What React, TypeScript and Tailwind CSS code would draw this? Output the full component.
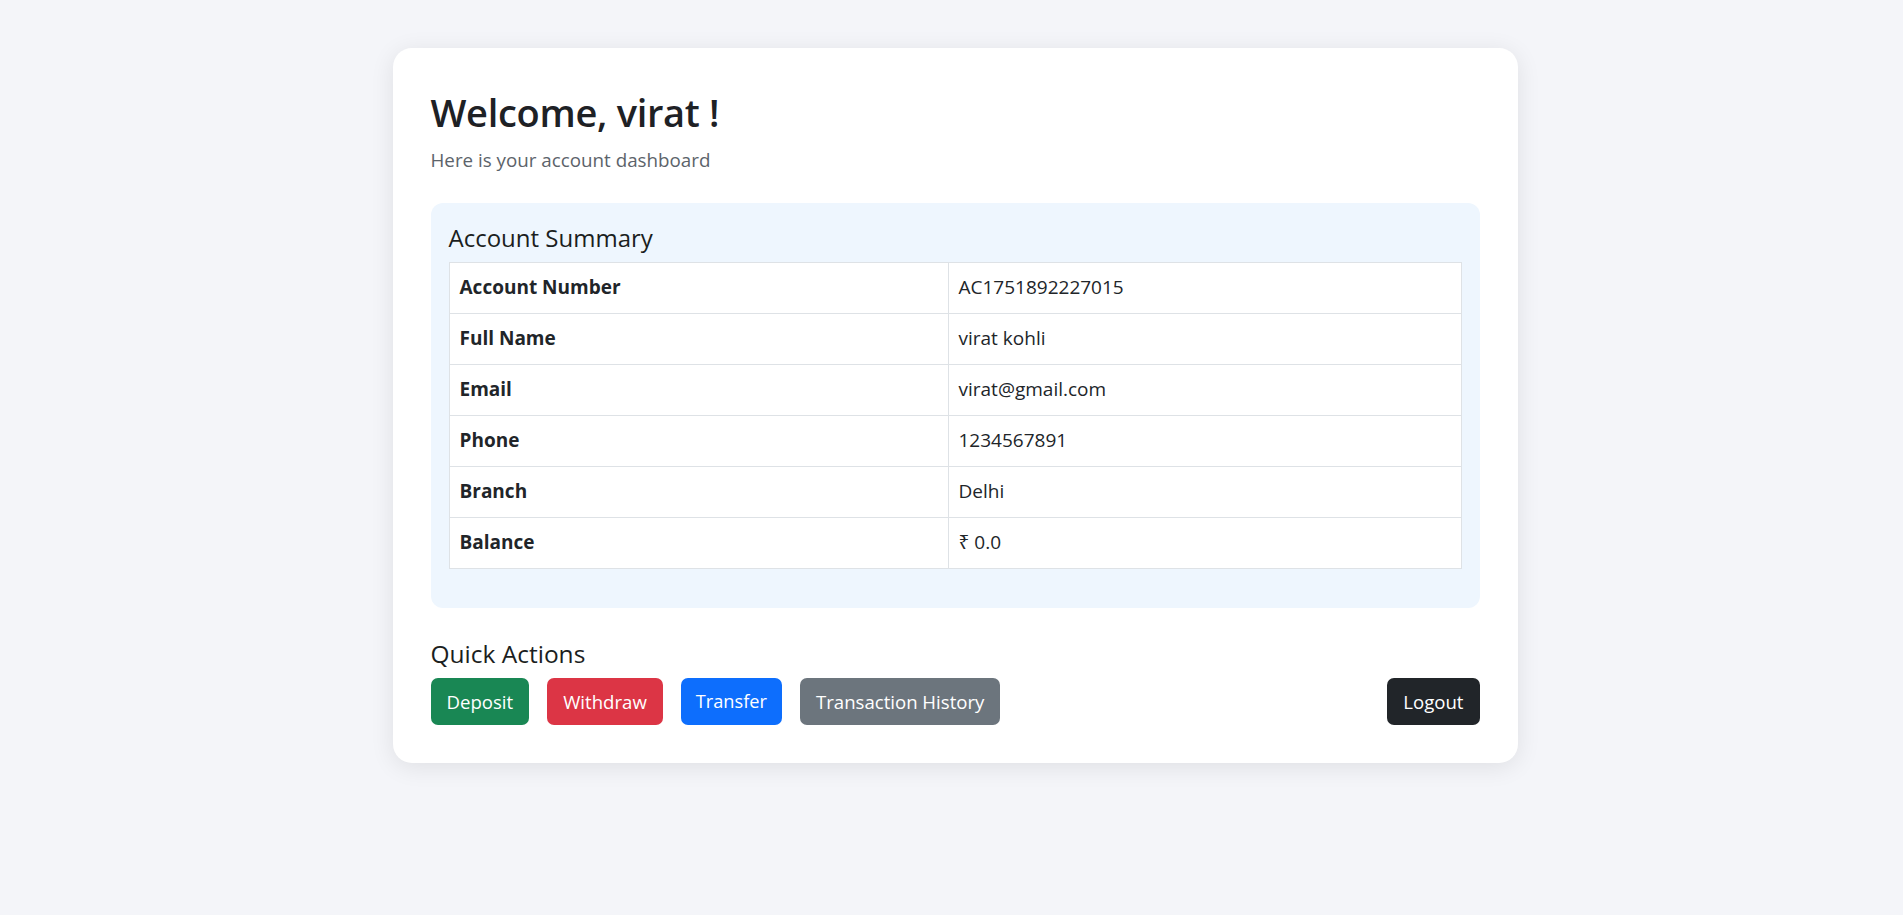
const rows: [string, string][] = [
  ['Account Number', 'AC1751892227015'],
  ['Full Name', 'virat kohli'],
  ['Email', 'virat@gmail.com'],
  ['Phone', '1234567891'],
  ['Branch', 'Delhi'],
  ['Balance', '₹ 0.0'],
]

export default function App() {
  return (
    <div
      className="min-h-screen bg-[#f4f5f9] pt-[48px] pl-[7px] text-[#212529]"
      style={{ fontFamily: '"Open Sans", "Noto Sans", sans-serif' }}
    >
      <div className="mx-auto w-[1125px] rounded-[19px] bg-white px-[38px] pt-[42px] pb-[38px] shadow-[0_4px_24px_rgba(0,0,0,0.09)]">
        {/* Header */}
        <h2 className="text-[38px] font-semibold leading-[1.2] tracking-[-0.3px] text-[#1e2125]">Welcome, virat !</h2>
        <p className="mt-[10px] text-[18.8px] text-[#5c636a]">Here is your account dashboard</p>

        {/* Account summary */}
        <div className="mt-[29px] rounded-[12px] bg-[#eef6fe] px-[18px] pt-[21px] pb-[39px]">
          <h5 className="mb-[9px] text-[24px] font-medium leading-[1.2] text-[#1b1e21]">Account Summary</h5>
          <table className="w-full border-collapse bg-white text-[19px]">
            <tbody>
              {rows.map(([label, value]) => (
                <tr key={label} className="h-[51px]">
                  <td className="w-[499px] border border-[#dee2e6] px-[10px] font-bold">{label}</td>
                  <td className="border border-[#dee2e6] px-[10px]">{value}</td>
                </tr>
              ))}
            </tbody>
          </table>
        </div>

        {/* Quick actions */}
        <h5 className="mt-[31px] text-[24.5px] font-medium leading-[1.2] text-[#1b1e21]">Quick Actions</h5>
        <div className="mt-[10px] flex items-center">
          <div className="flex gap-[18px]">
            <button className="h-[47px] rounded-[7px] bg-[#198754] px-[16px] text-[18.6px] text-white">Deposit</button>
            <button className="h-[47px] rounded-[7px] bg-[#dc3545] px-[16px] text-[18.6px] text-white">Withdraw</button>
            <button className="h-[47px] rounded-[7px] bg-[#0d6efd] px-[15px] text-[18.2px] text-white">Transfer</button>
            <button className="h-[47px] rounded-[7px] bg-[#6c757d] px-[16px] text-[18.6px] text-white">Transaction History</button>
          </div>
          <button className="ml-auto h-[47px] rounded-[7px] bg-[#212529] px-[16px] text-[18.6px] text-white">Logout</button>
        </div>
      </div>
    </div>
  )
}
